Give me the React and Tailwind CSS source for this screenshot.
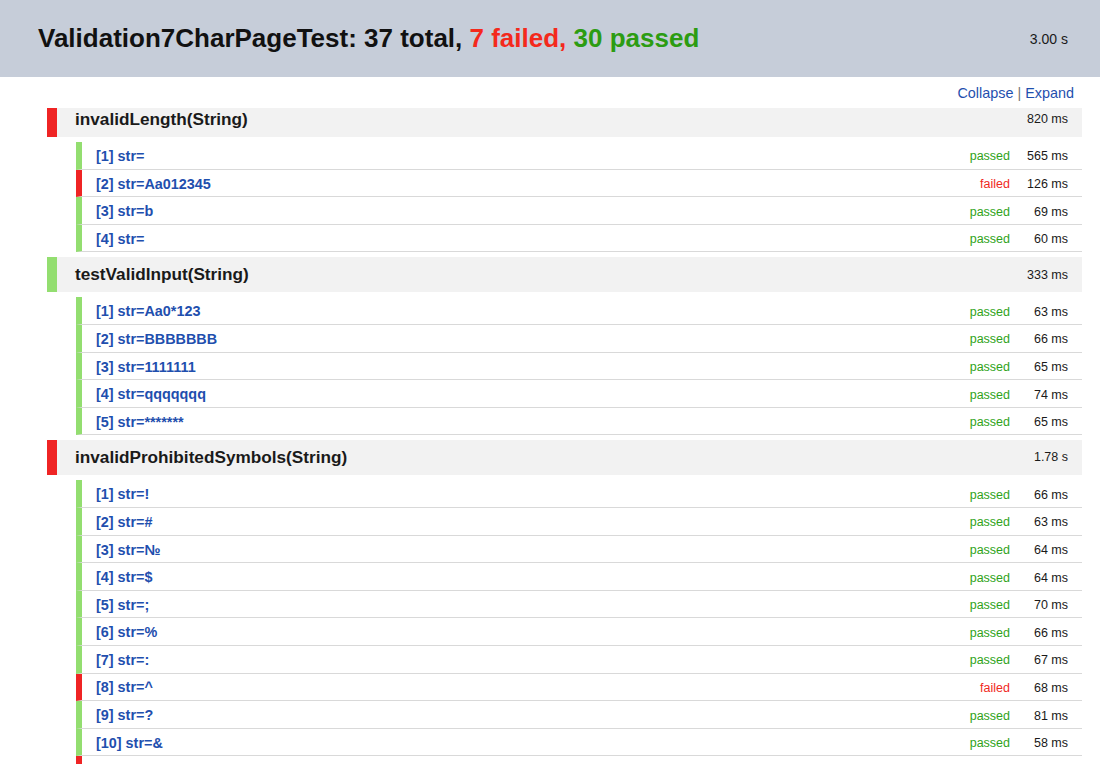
import React from 'react';

const groups = [
  {
    name: 'invalidLength(String)',
    ok: false,
    time: '820 ms',
    tests: [
      ['[1] str=', true, '565 ms'],
      ['[2] str=Aa012345', false, '126 ms'],
      ['[3] str=b', true, '69 ms'],
      ['[4] str=', true, '60 ms'],
    ],
  },
  {
    name: 'testValidInput(String)',
    ok: true,
    time: '333 ms',
    tests: [
      ['[1] str=Aa0*123', true, '63 ms'],
      ['[2] str=BBBBBBB', true, '66 ms'],
      ['[3] str=1111111', true, '65 ms'],
      ['[4] str=qqqqqqq', true, '74 ms'],
      ['[5] str=*******', true, '65 ms'],
    ],
  },
  {
    name: 'invalidProhibitedSymbols(String)',
    ok: false,
    time: '1.78 s',
    tests: [
      ['[1] str=!', true, '66 ms'],
      ['[2] str=#', true, '63 ms'],
      ['[3] str=№', true, '64 ms'],
      ['[4] str=$', true, '64 ms'],
      ['[5] str=;', true, '70 ms'],
      ['[6] str=%', true, '66 ms'],
      ['[7] str=:', true, '67 ms'],
      ['[8] str=^', false, '68 ms'],
      ['[9] str=?', true, '81 ms'],
      ['[10] str=&', true, '58 ms'],
      ['[11] str=*', false, '71 ms'],
    ],
  },
];

const TestRow = ({ test }) => {
  const [name, passed, time] = test;
  return (
    <div
      className={`flex items-center h-[27.6px] pt-[3px] border-b border-[#d9d9d9] border-l-[6px] ${
        passed ? 'border-l-[#93de70]' : 'border-l-[#ef2424]'
      }`}
    >
      <span className="flex-1 pl-[14px] text-[14.4px] font-bold text-[#1f4fae]">{name}</span>
      <span className={`text-[12.5px] ${passed ? 'text-[#2fa319]' : 'text-[#f0291d]'}`}>
        {passed ? 'passed' : 'failed'}
      </span>
      <span className="w-[72px] pr-[14px] text-right text-[12.5px] text-[#1a1a1a]">{time}</span>
    </div>
  );
};

const Group = ({ group, first }) => (
  <div>
    <div
      className={`flex items-center bg-[#f2f2f2] border-l-[10px] ${
        group.ok ? 'border-l-[#93de70]' : 'border-l-[#ef2424]'
      } ${first ? 'h-[29px] pb-[6px]' : 'h-[35px]'}`}
    >
      <span className="flex-1 pl-[18px] text-[17.2px] font-bold text-[#1a1a1a]">{group.name}</span>
      <span className="pr-[14px] text-[12.5px] text-[#1a1a1a]">{group.time}</span>
    </div>
    <div className="ml-[29px] my-[5px]">
      {group.tests.map((t, i) => (
        <TestRow key={i} test={t} />
      ))}
    </div>
  </div>
);

export default function App() {
  return (
    <div className="w-[1100px] h-[764px] overflow-hidden bg-white font-['Liberation_Sans',Arial,sans-serif]">
      <div className="flex items-center justify-between h-[77px] bg-[#c6cdd9] pl-[38px] pr-[32px]">
        <h1 className="text-[26px] font-bold text-[#111]">
          Validation7CharPageTest: 37 total, <span className="text-[#f4291c]">7 failed,</span>{' '}
          <span className="text-[#2c9c12]">30 passed</span>
        </h1>
        <span className="text-[14px] text-[#1a1a1a] mt-[2px]">3.00 s</span>
      </div>
      <div className="flex justify-end h-[31px] pt-[8px] pr-[26px] text-[14.4px] leading-[17px]">
        <a href="#" className="text-[#1f4fae]">Collapse</a>
        <span className="px-[4px] text-[#777]">|</span>
        <a href="#" className="text-[#1f4fae]">Expand</a>
      </div>
      <div className="ml-[47px] mr-[18px]">
        {groups.map((g, i) => (
          <Group key={i} group={g} first={i === 0} />
        ))}
      </div>
    </div>
  );
}
